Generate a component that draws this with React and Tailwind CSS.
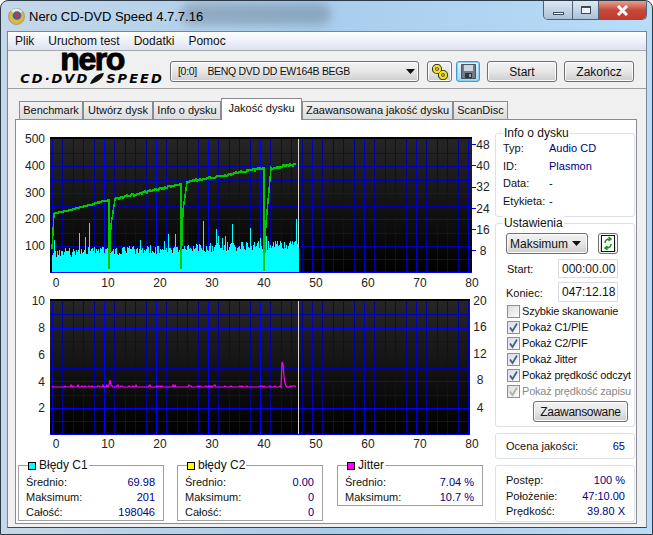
import { useMemo } from "react";

const font = "font-['Liberation_Sans',sans-serif]";
const btn = "flex items-center rounded-[3px] border border-[#707070] bg-gradient-to-b from-[#f3f3f3] via-[#e6e6e6] to-[#cdcdcd] shadow-[inset_0_0_0_1px_#fbfbfb]";
const box = "relative rounded-[3px] border border-[#dde1e6]";
const navy = "text-[#00007f]";

function rnd(seed) {
  let s = seed;
  return () => {
    s = (s * 16807) % 2147483647;
    return (s % 1000) / 1000;
  };
}

function Grid({ x0, x1, y0, y1, rows, bright, id }) {
  const cols = [];
  for (let v = 0; v <= 80; v += 2) cols.push(v);
  return (
    <g shapeRendering="crispEdges">
      <defs>
        <linearGradient id={id} x1="0" y1="0" x2="0" y2="1">
          <stop offset="0" stopColor="#262626" />
          <stop offset="1" stopColor="#000000" />
        </linearGradient>
      </defs>
      <rect x={x0} y={y0 - 2} width={x1 - x0} height={y1 - y0 + 3} fill={`url(#${id})`} />
      <rect x={x0} y={y0 - 2} width={x1 - x0} height="2" fill="#000" />
      {cols.map((v) => {
        const x = Math.round(52 + v * 5.2);
        const major = v === 10 || v === 20 || v === 30 || v === 40;
        return <line key={v} x1={x} x2={x} y1={y0} y2={y1} stroke={major ? "#0000ff" : v % 10 === 0 ? "#0000c8" : "#00009c"} />;
      })}
      {rows.map((y, i) => (
        <line key={i} x1={x0} x2={x1} y1={y} y2={y} stroke={bright.includes(i) ? "#0000ff" : "#0000b4"} />
      ))}
      <line x1={x0} x2={x1} y1={y1} y2={y1} stroke="#0000ff" />
      <line x1="298" x2="298" y1={y0} y2={y1} stroke="#d8d8d8" />
    </g>
  );
}

function Labels({ left, right, rightX, xy }) {
  return (
    <g className="fill-[#222] text-[12px]" fontFamily="'Liberation Sans',sans-serif">
      {left.map(([t, y]) => <text key={t} x="45" y={y + 4.5} textAnchor="end">{t}</text>)}
      {right.map(([t, y]) => <text key={t} x={rightX} y={y + 4.5} textAnchor="middle">{t}</text>)}
      {[0, 10, 20, 30, 40, 50, 60, 70, 80].map((v) => (
        <text key={v} x={56 + v * 5.2} y={xy + 4.5} textAnchor="middle">{v}</text>
      ))}
    </g>
  );
}

function SpeedChart() {
  const { bars, green } = useMemo(() => {
    const r = rnd(4711);
    const spikes = { 54: 240, 79: 233, 85: 237, 89: 223, 140: 240, 164: 241, 168: 234, 175: 234, 203: 221, 216: 229, 218: 236, 222: 238, 225: 236, 232: 224, 250: 228, 260: 238, 266: 236, 296: 219 };
    let b = "";
    for (let x = 52; x < 299; x++) {
      const base = 253 - ((x - 52) / 247) * 9 + (r() - 0.5) * 9;
      const top = spikes[x] ?? Math.round(base);
      b += `M${x} 272V${top}`;
    }
    // each run ends with the drop to the bottom before the drive speeds up again
    const segs = [
      [[52, 249], [54, 214], [109, 200], [109, 269]],
      [[109, 269], [111, 225], [115, 199], [181, 184], [181, 269]],
      [[181, 269], [183, 210], [187, 182], [264, 168], [264, 271]],
      [[264, 271], [266, 223], [271, 168], [296, 164]],
    ];
    const g = segs.map((pts, n) => {
      let p = "";
      pts.forEach(([x, y], i) => {
        p += `${x},${y} `;
        if (i < pts.length - 1 && pts[i + 1][0] - x > 8) {
          const [nx, ny] = pts[i + 1];
          for (let k = x + 1; k < nx; k++) {
            const amp = n === 3 ? 3 : n === 0 ? 1 : 2;
            const yy = y + ((ny - y) * (k - x)) / (nx - x) + (r() - 0.5) * amp;
            p += `${k},${Math.round(yy)} `;
          }
        }
      });
      return p;
    });
    return { bars: b, green: g };
  }, []);

  const rows = [153, 166, 180, 193, 206, 219, 233, 246, 259];
  return (
    <svg width="476" height="160" viewBox="18 130 476 160" className="block">
      <Grid id="g1" x0={50} x1={472} y0={139} y1={272} rows={rows} bright={[3, 5]} />
      <path d={bars} stroke="#00ffff" strokeWidth="1" shapeRendering="crispEdges" fill="none" />
      <line x1="298" x2="298" y1="139" y2="247" stroke="#d8d8d8" shapeRendering="crispEdges" />
      {green.map((p, i) => <polyline key={i} points={p} fill="none" stroke="#00c800" strokeWidth="1.5" shapeRendering="crispEdges" />)}
      {[144, 165, 187, 208, 229, 250].map((y) => <line key={y} x1="472" x2="476" y1={y} y2={y} stroke="#0000ff" shapeRendering="crispEdges" />)}
      <Labels
        left={[["500", 138], ["400", 165], ["300", 192], ["200", 218], ["100", 245]]}
        right={[["48", 144], ["40", 165], ["32", 186], ["24", 208], ["16", 229], ["8", 250]]}
        rightX={483}
        xy={282}
      />
    </svg>
  );
}

function JitterChart() {
  const line = useMemo(() => {
    const r = rnd(99);
    let p = "";
    for (let x = 52; x <= 296; x++) {
      let y = r() > 0.86 ? 386 : 387;
      if (r() > 0.97) y = 385;
      if (x === 110) y = 380;
      if (x === 109 || x === 111) y = 385;
      if (x === 282) y = 362;
      if (x === 283) y = 364;
      if (x === 284) y = 377;
      if (x === 285) y = 383;
      p += `${x},${y} `;
    }
    return p;
  }, []);

  const rows = [314, 328, 341, 355, 368, 381, 395, 408, 421];
  return (
    <svg width="476" height="160" viewBox="18 292 476 160" className="block">
      <Grid id="g2" x0={50} x1={470} y0={301} y1={434} rows={rows} bright={[1, 5, 7]} />
      <polyline points={line} fill="none" stroke="#ff00ff" strokeWidth="1.2" />
      <Labels
        left={[["10", 300], ["8", 327], ["6", 354], ["4", 381], ["2", 407]]}
        right={[["20", 300], ["16", 326], ["12", 353], ["8", 379], ["4", 407]]}
        rightX={480}
        xy={443}
      />
    </svg>
  );
}

function Legend({ color, title, rows, className }) {
  return (
    <div className={`relative w-[146px] border border-[#a0a0a0] pt-[9px] pl-[7px] pr-[8px] ${className}`}>
      <div className="absolute left-[9px] top-[-8px] flex items-center gap-[3px] bg-white pr-px text-[12px] leading-[15px]">
        <span className="h-[8px] w-[8px] border border-black" style={{ background: color }} />
        <span>{title}</span>
      </div>
      {rows.map(([k, v]) => (
        <div key={k} className="flex h-[15px] items-center justify-between">
          <span>{k}</span>
          <span className={navy}>{v}</span>
        </div>
      ))}
    </div>
  );
}

function Check({ on, disabled, label }) {
  return (
    <div className={`flex h-[16px] items-center gap-[2px] whitespace-nowrap ${disabled ? "text-[#8a8a8a]" : ""}`}>
      <span className="flex h-[13px] w-[13px] shrink-0 items-center justify-center border border-[#8e8f8f] bg-gradient-to-br from-[#dcdcdc] to-[#fbfbfb]">
        {on && (
          <svg width="11" height="11" viewBox="0 0 11 11">
            <path d="M2 5.5 L4.5 9 L9 1.5" fill="none" stroke={disabled ? "#b0b0b0" : "#3c5fa8"} strokeWidth="1.8" />
          </svg>
        )}
      </span>
      <span className="tracking-[-0.2px]">{label}</span>
    </div>
  );
}

function Arrow() {
  return (
    <svg width="9" height="5" viewBox="0 0 9 5" className="shrink-0"><path d="M0 0H9L4.5 5Z" fill="#111" /></svg>
  );
}

function Tabs() {
  const tabs = [
    ["Benchmark", "w-[64px]"],
    ["Utwórz dysk", "w-[70px]"],
    ["Info o dysku", "w-[68px]"],
    ["Jakość dysku", "w-[81px]", true],
    ["Zaawansowana jakość dysku", "w-[151px]"],
    ["ScanDisc", "w-[55px]"],
  ];
  return (
    <div className="relative z-10 ml-[11px] mt-[9px] flex h-[21px] items-end">
      {tabs.map(([t, w, on]) => (
        <div
          key={t}
          className={`${w} flex shrink-0 items-center justify-center whitespace-nowrap border border-[#898c95] ${
            on ? "mb-[-1px] h-[22px] border-b-0 bg-white pb-[3px]" : "h-[18px] border-b-0 bg-gradient-to-b from-[#f2f2f2] to-[#dcdcdc]"
          }`}
        >
          {t}
        </div>
      ))}
    </div>
  );
}

function InfoBox() {
  const rows = [["Typ:", "Audio CD"], ["ID:", "Plasmon"], ["Data:", "-"], ["Etykieta:", "-"]];
  return (
    <div className={`${box} h-[84px] w-[140px] pl-[7px] pt-[6px]`}>
      <span className="absolute left-[7px] top-[-8px] bg-white px-px text-[12px] leading-[15px]">Info o dysku</span>
      {rows.map(([k, v]) => (
        <div key={k} className="flex h-[17.5px] items-center">
          <span className="w-[46px]">{k}</span>
          <span className={navy}>{v}</span>
        </div>
      ))}
    </div>
  );
}

function SettingsBox() {
  return (
    <div className={`${box} mt-[6px] h-[204px] w-[140px] pl-[10px] pt-[9px]`}>
      <span className="absolute left-[7px] top-[-8px] bg-white px-px text-[12px] leading-[15px]">Ustawienia</span>
      <div className="flex items-center">
        <div className={`${btn} h-[21px] w-[82px] justify-between pl-[3px] pr-[6px] text-[12px]`}>
          <span>Maksimum</span>
          <Arrow />
        </div>
        <div className={`${btn} ml-[10px] h-[21px] w-[20px] justify-center`}>
          <svg width="16" height="17" viewBox="0 0 16 17">
            <rect x="1.5" y="0.5" width="13" height="16" fill="#fff" stroke="#111" />
            <path d="M5 8 C5 5 7 4 10 4 M8.5 2 L11 4 L8.5 6" fill="none" stroke="#169016" strokeWidth="1.5" />
            <path d="M11 9 C11 12 9 13 6 13 M7.5 11 L5 13 L7.5 15" fill="none" stroke="#169016" strokeWidth="1.5" />
          </svg>
        </div>
      </div>
      <div className="mt-[5px] flex h-[19px] items-center">
        <span className="w-[52px] pl-px pt-[2px]">Start:</span>
        <span className="flex h-[19px] w-[60px] items-center border border-[#d9dde3] pl-[3px] text-[12px]">000:00.00</span>
      </div>
      <div className="mt-[4px] flex h-[20px] items-center">
        <span className="w-[52px] pt-[2px]">Koniec:</span>
        <span className="flex h-[20px] w-[60px] items-center border border-[#d9dde3] pl-[3px] text-[12px]">047:12.18</span>
      </div>
      <div className="ml-px mt-px w-[124px] overflow-hidden">
        <Check label="Szybkie skanowanie" />
        <Check on label="Pokaż C1/PIE" />
        <Check on label="Pokaż C2/PIF" />
        <Check on label="Pokaż Jitter" />
        <Check on label="Pokaż prędkość odczyt" />
        <Check on disabled label="Pokaż prędkość zapisu" />
      </div>
      <div className={`${btn} ml-[27px] mt-[2px] h-[21px] w-[95px] justify-center text-[12px] tracking-[-0.3px]`}>Zaawansowane</div>
    </div>
  );
}

function TitleBar() {
  return (
    <div className="relative flex h-[30px] items-center pl-[7px]">
      <div className="absolute left-[180px] top-[2px] h-[22px] w-[150px] rounded-full bg-[#5e7184] opacity-40 blur-[5px]" />
      <svg width="17" height="17" viewBox="0 0 17 17" className="relative shrink-0">
        <circle cx="8.5" cy="8.5" r="8" fill="#d9b84a" />
        <circle cx="8.5" cy="8.5" r="8" fill="none" stroke="#9a8a50" strokeWidth="0.7" />
        <path d="M8.5 8.5 L3 2.5 A8 8 0 0 1 14.5 3.5Z" fill="#e8e8f0" />
        <circle cx="9" cy="7.5" r="4.3" fill="#4a5f9a" />
        <circle cx="9" cy="7.5" r="2" fill="#d03a2a" />
      </svg>
      <span className="relative ml-[4px] text-[13px] leading-none text-black">Nero CD-DVD Speed 4.7.7.16</span>
      <div className="absolute right-[5px] top-0 flex h-[19px] overflow-hidden rounded-b-[5px] border border-t-0 border-[#4f6173]">
        <div className="flex w-[29px] items-end justify-center border-r border-[#4f6173] bg-gradient-to-b from-[#dde9f4] to-[#a9c1d8] pb-[4px]">
          <span className="h-[3px] w-[11px] border border-[#3d4a5a] bg-white" />
        </div>
        <div className="flex w-[26px] items-center justify-center border-r border-[#4f6173] bg-gradient-to-b from-[#dde9f4] to-[#a9c1d8]">
          <span className="h-[8px] w-[10px] border border-t-2 border-[#3d4a5a] bg-white/70" />
        </div>
        <div className="flex w-[47px] items-center justify-center bg-gradient-to-b from-[#e3a08e] via-[#c8493a] to-[#c13a2c]">
          <svg width="13" height="11" viewBox="0 0 13 11">
            <path d="M2 1 L11 10 M11 1 L2 10" stroke="#fff" strokeWidth="3" />
          </svg>
        </div>
      </div>
    </div>
  );
}

function Toolbar() {
  return (
    <div className="flex h-[38px] items-start border-b border-[#a0a0a0] pl-[6px]">
      <div className="flex w-[156px] shrink-0 flex-col items-center text-black">
        <span className="mt-[-4px] font-['Liberation_Sans'] text-[32px] font-bold leading-[24px] tracking-[-1.5px] [-webkit-text-stroke:1px_black]">nero</span>
        <span className="mt-[2px] flex items-center font-['DejaVu_Sans'] text-[13px] font-bold italic leading-[11px] tracking-[2px]">
          CD·DVD
          <svg width="16" height="11" viewBox="0 0 16 11" className="mr-px">
            <path d="M1 11 C3 5 9 0 15 0 C14 5 8 10 1 11Z" fill="#111" />
          </svg>
          SPEED
        </span>
      </div>
      <div className={`${btn} mt-[10px] h-[21px] w-[249px] justify-between pl-[7px] pr-[3px]`}>
        <span className="whitespace-pre text-[10.5px] tracking-[-0.3px]">[0:0]    BENQ DVD DD EW164B BEGB</span>
        <Arrow />
      </div>
      <div className={`${btn} ml-[8px] mt-[10px] h-[21px] w-[25px] justify-center`}>
        <svg width="18" height="16" viewBox="0 0 18 16">
          <g fill="none" stroke="#222" strokeWidth="4.2"><circle cx="6" cy="5" r="3" /><circle cx="12" cy="11" r="3" /></g>
          <g fill="none" stroke="#f2e21a" strokeWidth="2.4"><circle cx="6" cy="5" r="3" /><circle cx="12" cy="11" r="3" /></g>
        </svg>
      </div>
      <div className="ml-[4px] mt-[10px] flex h-[21px] w-[24px] items-center justify-center rounded-[3px] border border-[#3c9ad4] bg-gradient-to-b from-[#e4f4fc] to-[#a9d6ef] shadow-[inset_0_0_0_1px_#8fd0f2]">
        <svg width="15" height="15" viewBox="0 0 15 15">
          <path d="M0.5 0.5H14.5V14.5H0.5Z" fill="#6f7c88" stroke="#4b5560" />
          <rect x="3" y="1" width="9" height="6" fill="#cfd5da" />
          <rect x="4" y="9" width="7" height="5" fill="#2f363c" />
          <rect x="8" y="10" width="2" height="3" fill="#9aa4ad" />
        </svg>
      </div>
      <div className={`${btn} ml-[7px] mt-[10px] h-[21px] w-[70px] justify-center text-[12px]`}>Start</div>
      <div className={`${btn} ml-[7px] mt-[10px] h-[21px] w-[70px] justify-center text-[12px]`}>Zakończ</div>
    </div>
  );
}

export default function App() {
  return (
    <div className={`${font} h-[535px] w-[653px] overflow-hidden rounded-t-[8px] border border-[#2c3a48] bg-gradient-to-r from-[#c4d8e8] via-[#a9cdec] to-[#b9dcf8] text-[11px] leading-none text-[#111]`}>
      <TitleBar />
      <div className="ml-[6px] mr-[5px] h-[497px] border border-[#76879a] border-b-[#3a4652] bg-[#f0f0f0]">
        <div className="flex h-[19px] items-center gap-[14px] border-b border-[#a9a9a9] bg-gradient-to-b from-white to-[#dbe2f2] pl-[7px] text-[12px]">
          <span>Plik</span>
          <span>Uruchom test</span>
          <span>Dodatki</span>
          <span>Pomoc</span>
        </div>
        <Toolbar />
        <Tabs />
        <div className="ml-[7px] flex h-[405px] w-[622px] border border-[#898c95] bg-white">
          <div className="ml-[2px] w-[476px] shrink-0 pt-[10px]">
            <SpeedChart />
            <div className="h-[2px]" />
            <JitterChart />
            <div className="mt-[13px] flex items-start">
              <Legend color="#00ffff" title="Błędy C1" rows={[["Średnio:", "69.98"], ["Maksimum:", "201"], ["Całość:", "198046"]]} />
              <Legend className="ml-[13px]" color="#ffff00" title="błędy C2" rows={[["Średnio:", "0.00"], ["Maksimum:", "0"], ["Całość:", "0"]]} />
              <Legend className="ml-[14px]" color="#ff00ff" title="Jitter" rows={[["Średnio:", "7.04 %"], ["Maksimum:", "10.7 %"]]} />
            </div>
          </div>
          <div className="ml-px pt-[13px]">
            <InfoBox />
            <SettingsBox />
            <div className={`${box} mt-[6px] flex h-[26px] w-[140px] items-center justify-between pl-[10px] pr-[9px]`}>
              <span>Ocena jakości:</span>
              <span className={navy}>65</span>
            </div>
            <div className={`${box} mt-[6px] h-[57px] w-[140px] pl-[10px] pr-[9px] pt-[7px]`}>
              {[["Postęp:", "100 %"], ["Położenie:", "47:10.00"], ["Prędkość:", "39.80 X"]].map(([k, v]) => (
                <div key={k} className="flex h-[15.5px] items-center justify-between">
                  <span>{k}</span>
                  <span className={navy}>{v}</span>
                </div>
              ))}
            </div>
          </div>
        </div>
      </div>
    </div>
  );
}
